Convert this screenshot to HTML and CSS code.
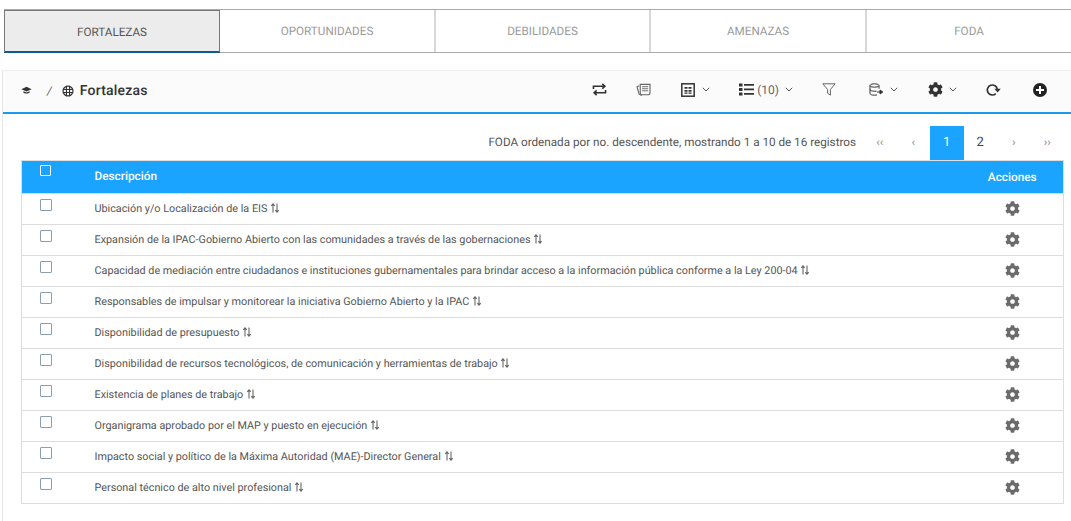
FILE: index.html
```html
<!DOCTYPE html>
<html lang="es">
<head>
<meta charset="utf-8">
<title>Fortalezas</title>
<link rel="stylesheet" href="styles.css">
</head>
<body>
<svg class="defs" width="0" height="0">
  <symbol id="gear" viewBox="0 0 512 512"><path d="M487.4 315.7l-42.6-24.6c4.3-23.2 4.3-47 0-70.2l42.6-24.6c4.9-2.8 7.1-8.6 5.5-14-11.1-35.6-30-67.8-54.7-94.6-3.8-4.1-10-5.1-14.8-2.3L380.8 110c-17.9-15.4-38.5-27.3-60.8-35.1V25.8c0-5.6-3.9-10.5-9.4-11.7-36.7-8.2-74.3-7.8-109.2 0-5.5 1.2-9.4 6.1-9.4 11.7V75c-22.2 7.9-42.8 19.8-60.8 35.1L88.7 85.5c-4.9-2.8-11-1.9-14.8 2.3-24.7 26.7-43.6 58.9-54.7 94.6-1.7 5.4.6 11.2 5.5 14L67.3 221c-4.3 23.2-4.3 47 0 70.2l-42.6 24.6c-4.9 2.8-7.1 8.6-5.5 14 11.1 35.6 30 67.8 54.7 94.6 3.8 4.1 10 5.1 14.8 2.3l42.6-24.6c17.9 15.4 38.5 27.3 60.8 35.1v49.2c0 5.6 3.9 10.5 9.4 11.7 36.7 8.2 74.3 7.8 109.2 0 5.5-1.2 9.4-6.1 9.4-11.7v-49.2c22.2-7.9 42.8-19.8 60.8-35.1l42.6 24.6c4.9 2.8 11 1.9 14.8-2.3 24.7-26.7 43.6-58.9 54.7-94.6 1.5-5.5-.7-11.3-5.6-14.1zM256 336c-44.1 0-80-35.9-80-80s35.9-80 80-80 80 35.9 80 80-35.9 80-80 80z"/></symbol>
  <symbol id="sort" viewBox="0 0 10 10"><path d="M3 9.500V1M1.300 2.800 3 .8l1.700 2M7 .5V9M5.300 7.200 7 9.200l1.700-2" fill="none" stroke="currentColor" stroke-width="1.100"/></symbol>
  <symbol id="chev" viewBox="0 0 8 5"><path d="M.8.8 4 4 7.200.8" fill="none" stroke="currentColor" stroke-width="1"/></symbol>
</svg>

<nav class="tabs">
  <a class="tab active">FORTALEZAS</a>
  <a class="tab">OPORTUNIDADES</a>
  <a class="tab">DEBILIDADES</a>
  <a class="tab">AMENAZAS</a>
  <a class="tab last">FODA</a>
</nav>

<main class="panel">
  <header class="bar">
    <div class="crumbs">
      <svg class="i-cap" viewBox="0 0 16 12"><path d="M8 .5 15.500 4 8 7.500.5 4z" fill="#333"/><path d="M3.500 7v1.800C5 10.800 11 10.800 12.500 8.800V7L8 9z" fill="#333"/></svg>
      <span class="sep">/</span>
      <svg class="i-life" viewBox="0 0 14 14"><circle cx="7" cy="7" r="5.800" fill="none" stroke="#333" stroke-width="1.400"/><path d="M5.200 1v12M8.800 1v12M1 5.200h12M1 8.800h12" stroke="#333" stroke-width="1.300"/><rect x="5.900" y="5.900" width="2.200" height="2.200" fill="#fbfbfb"/></svg>
      <span class="title">Fortalezas</span>
    </div>
    <div class="tools">
      <svg class="tool t1" viewBox="0 0 16 14"><path d="M1.500 6.500V3.500H13M11 1l2.800 2.500L11 6M14.500 7.500v3H3M5 8 2.200 10.500 5 13" fill="none" stroke="#333" stroke-width="1.700"/></svg>
      <svg class="tool t2" viewBox="0 0 16 14"><path d="M4.500 1.500h10.500v9.500c0 1-.7 1.700-1.700 1.700H6.500c-1 0-2-.7-2-1.700z" fill="none" stroke="#666" stroke-width="1.200"/><path d="M6.500 4h6.500M6.500 6.200h6.500M6.500 8.400h6.500" stroke="#666" stroke-width="1"/><path d="M3.500 3 1 4l2.300 8 2.700 1.500" fill="none" stroke="#666" stroke-width="1.200"/></svg>
      <span class="group g3">
        <svg class="tool t3" viewBox="0 0 14 14"><rect x=".8" y=".8" width="12.400" height="12.400" fill="none" stroke="#333" stroke-width="1.500"/><path d="M3.500 4h3v1.800h-3zM7.500 4h3v1.800h-3zM3.500 7h3v1.800h-3zM7.500 7h3v1.800h-3zM3.500 9.500h3v1.300h-3zM7.500 9.500h3v1.300h-3z" fill="#333"/></svg>
        <svg class="chev"><use href="#chev"/></svg>
      </span>
      <span class="group g4">
        <svg class="tool t4" viewBox="0 0 15 13"><path d="M0 .5h3.500v3H0zM0 5h3.500v3H0zM0 9.500h3.500v3H0zM5 1h10v1.800H5zM5 5.500h10v1.800H5zM5 10h10v1.800H5z" fill="#333"/></svg>
        <span class="count">(10)</span>
        <svg class="chev"><use href="#chev"/></svg>
      </span>
      <svg class="tool t5" viewBox="0 0 14 13"><path d="M.8.8h12.400L8.400 6.500v5.700L5.600 10.200V6.500z" fill="none" stroke="#666" stroke-width="1"/></svg>
      <span class="group g6">
        <svg class="tool t6" viewBox="0 0 15 13"><ellipse cx="5.500" cy="2.500" rx="4.500" ry="1.700" fill="none" stroke="#333"/><path d="M1 2.500v8c0 1 2 1.700 4.500 1.700 1 0 1.800-.1 2.500-.3M10 2.500v3.200M1 6.500c0 1 2 1.700 4.500 1.700h2" fill="none" stroke="#333"/><path d="M8 9h4.500M11 7l2.800 2L11 11z" fill="#333" stroke="#333" stroke-width="1"/></svg>
        <svg class="chev"><use href="#chev"/></svg>
      </span>
      <span class="group g7">
        <svg class="tool t7"><use href="#gear"/></svg>
        <svg class="chev"><use href="#chev"/></svg>
      </span>
      <svg class="tool t8" viewBox="0 0 15 13"><path d="M9.800 10.600A5 5 0 1 1 11.300 6.500" fill="none" stroke="#333" stroke-width="1.700"/><path d="M14.800 5.800H8.400l3.200 3.600z" fill="#333"/></svg>
      <svg class="tool t9" viewBox="0 0 14 14"><circle cx="7" cy="7" r="7" fill="#222"/><path d="M6 3h2v3h3v2H8v3H6V8H3V6h3z" fill="#fff"/></svg>
    </div>
  </header>

  <div class="pager-row">
    <span class="info">FODA ordenada por no. descendente, mostrando 1 a 10 de 16 registros</span>
    <ul class="pager">
      <li class="nav">‹‹</li>
      <li class="nav">‹</li>
      <li class="page current">1</li>
      <li class="page">2</li>
      <li class="nav">›</li>
      <li class="nav">››</li>
    </ul>
  </div>

  <table class="grid">
    <thead>
      <tr><th class="c-check"><span class="box"></span></th><th class="c-desc">Descripción</th><th class="c-act">Acciones</th></tr>
    </thead>
    <tbody>
      <tr><td class="c-check"><span class="box"></span></td><td class="c-desc">Ubicación y/o Localización de la EIS <svg class="sort"><use href="#sort"/></svg></td><td class="c-act"><svg class="gear"><use href="#gear"/></svg></td></tr>
      <tr><td class="c-check"><span class="box"></span></td><td class="c-desc">Expansión de la IPAC-Gobierno Abierto con las comunidades a través de las gobernaciones <svg class="sort"><use href="#sort"/></svg></td><td class="c-act"><svg class="gear"><use href="#gear"/></svg></td></tr>
      <tr><td class="c-check"><span class="box"></span></td><td class="c-desc">Capacidad de mediación entre ciudadanos e instituciones gubernamentales para brindar acceso a la información pública conforme a la Ley 200-04 <svg class="sort"><use href="#sort"/></svg></td><td class="c-act"><svg class="gear"><use href="#gear"/></svg></td></tr>
      <tr><td class="c-check"><span class="box"></span></td><td class="c-desc">Responsables de impulsar y monitorear la iniciativa Gobierno Abierto y la IPAC <svg class="sort"><use href="#sort"/></svg></td><td class="c-act"><svg class="gear"><use href="#gear"/></svg></td></tr>
      <tr><td class="c-check"><span class="box"></span></td><td class="c-desc">Disponibilidad de presupuesto <svg class="sort"><use href="#sort"/></svg></td><td class="c-act"><svg class="gear"><use href="#gear"/></svg></td></tr>
      <tr><td class="c-check"><span class="box"></span></td><td class="c-desc">Disponibilidad de recursos tecnológicos, de comunicación y herramientas de trabajo <svg class="sort"><use href="#sort"/></svg></td><td class="c-act"><svg class="gear"><use href="#gear"/></svg></td></tr>
      <tr><td class="c-check"><span class="box"></span></td><td class="c-desc">Existencia de planes de trabajo <svg class="sort"><use href="#sort"/></svg></td><td class="c-act"><svg class="gear"><use href="#gear"/></svg></td></tr>
      <tr><td class="c-check"><span class="box"></span></td><td class="c-desc">Organigrama aprobado por el MAP y puesto en ejecución <svg class="sort"><use href="#sort"/></svg></td><td class="c-act"><svg class="gear"><use href="#gear"/></svg></td></tr>
      <tr><td class="c-check"><span class="box"></span></td><td class="c-desc">Impacto social y político de la Máxima Autoridad (MAE)-Director General <svg class="sort"><use href="#sort"/></svg></td><td class="c-act"><svg class="gear"><use href="#gear"/></svg></td></tr>
      <tr><td class="c-check"><span class="box"></span></td><td class="c-desc">Personal técnico de alto nivel profesional <svg class="sort"><use href="#sort"/></svg></td><td class="c-act"><svg class="gear"><use href="#gear"/></svg></td></tr>
    </tbody>
  </table>
</main>
</body>
</html>
```

FILE: styles.css
```css
* { box-sizing: border-box; }
html, body { margin: 0; height: 100%; overflow: hidden; }
body {
  background: #fff;
  color: #444;
  font-family: Roboto, "Liberation Sans", sans-serif;
  padding-top: 9px;
  text-rendering: geometricPrecision;
}
.defs { display: block; height: 0; }

.tabs {
  display: grid;
  grid-template-columns: 216px 216px 215px 216px 204px;
  margin-left: 4px;
  height: 44px;
  border-top: 1px solid #aaa;
  border-bottom: 1px solid #aaa;
}
.tab {
  display: flex;
  align-items: center;
  justify-content: center;
  font-size: 11.700px;
  color: #9a9a9a;
  border-right: 2px solid #d8d8d8;
}
.tab.last { border-right: 0; }
.tab.active {
  color: #555;
  background: #ececec;
  border: 1px solid #777;
  border-bottom: 0;
  box-shadow: 0 1px 0 #0d5c8f, inset 0 -1px 0 #0d5c8f;
}

.panel {
  margin-top: 17px;
  margin-left: 2px;
  border-left: 1px solid #e6e6e6;
  height: 460px;
}
.bar {
  display: flex;
  align-items: center;
  justify-content: space-between;
  height: 44px;
  background: #fbfbfb;
  border-top: 1px solid #eee;
  border-bottom: 2px solid #1a9bea;
  padding: 0 24px 2px 0;
}
.crumbs { display: flex; align-items: center; padding-left: 18px; }
.i-cap { width: 11px; height: 9px; }
.sep { font-size: 12px; color: #666; margin-left: 15px; font-style: italic; }
.i-life { width: 12px; height: 12px; margin-left: 10px; }
.title { font-size: 14px; font-weight: 500; color: #333; margin-left: 6px; letter-spacing: .2px; }

.tools { display: flex; align-items: center; padding-bottom: 2px; }
.tool { display: block; flex: none; fill: #333; }
.group { display: flex; align-items: center; flex: none; }
.chev { width: 8px; height: 5px; color: #555; margin-left: 7px; flex: none; }
.t1 { width: 15px; height: 13px; }
.t2 { width: 15px; height: 13px; margin-left: 29px; }
.g3 { margin-left: 30px; }
.t3 { width: 14px; height: 14px; }
.g4 { margin-left: 29px; }
.t4 { width: 15px; height: 13px; }
.count { font-size: 12px; color: #666; margin-left: 3px; }
.g4 .chev { margin-left: 6px; }
.t5 { width: 14px; height: 13px; margin-left: 29px; }
.g6 { margin-left: 33px; }
.t6 { width: 15px; height: 13px; }
.g6 .chev, .g7 .chev { margin-left: 6px; }
.g7 { margin-left: 30px; }
.t7 { width: 15px; height: 15px; }
.t8 { width: 15px; height: 13px; margin-left: 29px; }
.t9 { width: 14px; height: 14px; margin-left: 32px; }

.pager-row {
  display: flex;
  justify-content: flex-end;
  align-items: center;
  height: 34px;
  margin-top: 12px;
  padding-right: 7px;
}
.info { font-size: 11.700px; color: #555; margin-right: 7px; padding-bottom: 2px; }
.pager { display: flex; list-style: none; margin: 0; padding: 0; height: 34px; }
.pager li { display: flex; align-items: center; justify-content: center; width: 33.500px; padding-bottom: 2px; }
.nav { font-size: 12px; color: #888; }
.page { font-size: 13px; color: #444; }
.page.current { background: #1aa3ff; color: #fff; }

.grid {
  border-collapse: collapse;
  table-layout: fixed;
  width: 1043px;
  margin-left: 18px;
  font-size: 10.800px;
  border: 1px solid #ddd;
}
.grid th {
  height: 33px;
  background: #1aa3ff;
  color: #fff;
  font-size: 11.800px;
  font-weight: 500;
  text-align: left;
  padding-bottom: 2px;
}
.grid td {
  height: 31px;
  color: #555;
  border-top: 1px solid #ddd;
  padding-bottom: 2px;
}
.grid .c-check { width: 72px; padding: 4px 0 0; vertical-align: top; }
.grid td.c-check { padding-top: 5px; }
.c-desc { padding-top: 0; }
.c-act { width: 103px; text-align: center !important; padding-left: 2px; }
.grid td.c-act { padding-bottom: 3px; }
.box {
  display: block;
  width: 12px;
  height: 12px;
  margin-left: 18px;
  border: 1px solid #8aa0b0;
  background: #fff;
  border-radius: 1px;
}
th .box { width: 11px; height: 11px; border-color: #fff; background: transparent; }
.sort { width: 10px; height: 10px; color: #666; vertical-align: -1px; }
.gear { display: block; width: 15px; height: 15px; margin: 0 auto; fill: #6b6b6b; }
```
